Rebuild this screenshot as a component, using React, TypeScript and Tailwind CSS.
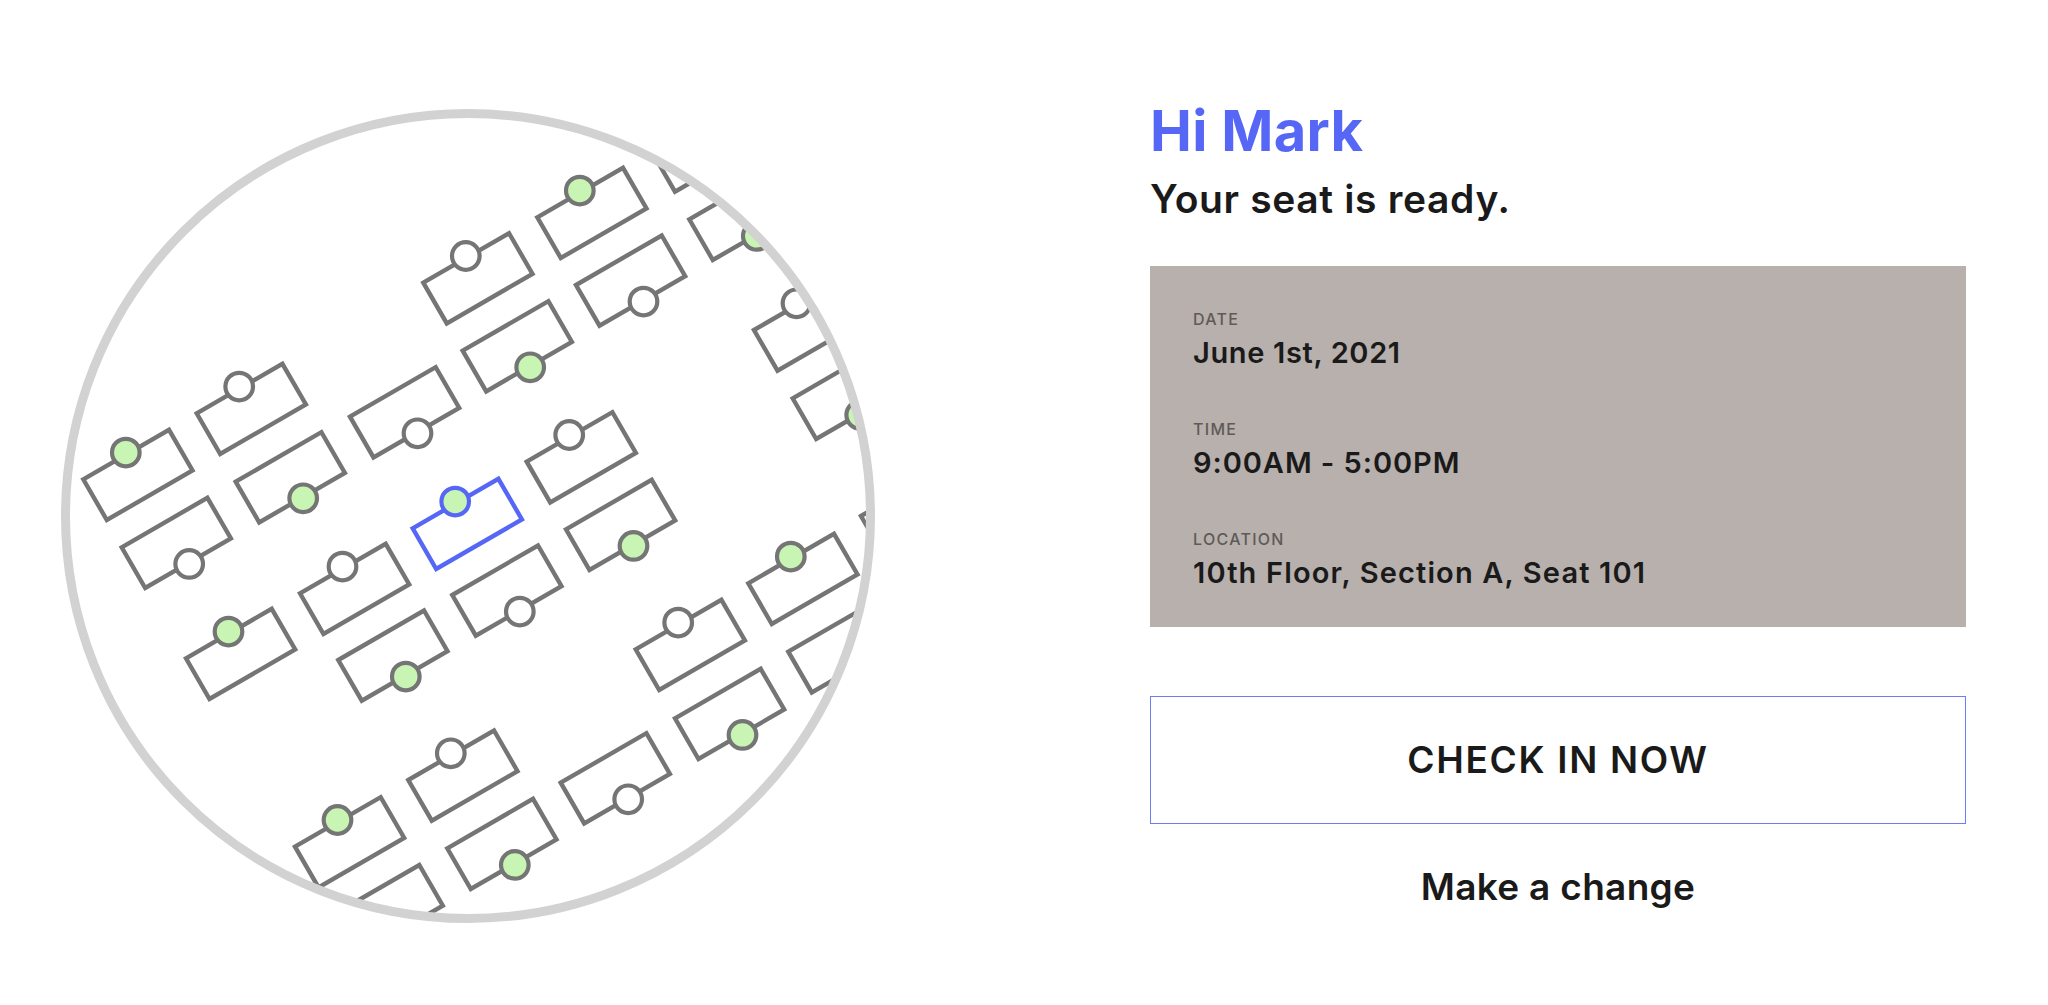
type Seat = { x: number; y: number; dot: "top" | "bottom"; on?: boolean; selected?: boolean };

// x, y is the left corner of each seat, in page pixels
const seats: Seat[] = [
  { x: 83.3, y: 479.3, dot: "top", on: true },
  { x: 196.7, y: 413.3, dot: "top" },
  { x: 235.7, y: 481.7, dot: "bottom", on: true },
  { x: 350, y: 416.7, dot: "bottom" },
  { x: 423.3, y: 282.7, dot: "top" },
  { x: 462.7, y: 350.7, dot: "bottom", on: true },
  { x: 537.3, y: 217.3, dot: "top", on: true },
  { x: 576, y: 285, dot: "bottom" },
  { x: 689.3, y: 219.3, dot: "bottom", on: true },
  { x: 651.5, y: 151, dot: "top" },
  { x: 754, y: 330, dot: "top" },
  { x: 792.7, y: 398.3, dot: "bottom", on: true },
  { x: 526.7, y: 461.7, dot: "top" },
  { x: 566, y: 529.3, dot: "bottom", on: true },
  { x: 121.7, y: 547.3, dot: "bottom" },
  { x: 186, y: 658.3, dot: "top", on: true },
  { x: 300, y: 593.3, dot: "top" },
  { x: 338.3, y: 660, dot: "bottom", on: true },
  { x: 452.3, y: 595, dot: "bottom" },
  { x: 408.3, y: 780, dot: "top" },
  { x: 295, y: 846.7, dot: "top", on: true },
  { x: 447.3, y: 848.3, dot: "bottom", on: true },
  { x: 333.6, y: 914.5, dot: "bottom" },
  { x: 748.3, y: 583.3, dot: "top", on: true },
  { x: 635.7, y: 649.3, dot: "top" },
  { x: 675, y: 718.3, dot: "bottom", on: true },
  { x: 560.7, y: 782.7, dot: "bottom" },
  { x: 788.3, y: 651.7, dot: "bottom", on: true },
  { x: 861, y: 516, dot: "top" },
  { x: 412.7, y: 528.3, dot: "top", on: true, selected: true },
];

function SeatShape({ seat }: { seat: Seat }) {
  const { x, y } = seat;
  const color = seat.selected ? "#5667f5" : "#757575";
  const points = `${x},${y} ${x + 85.7},${y - 49.5} ${x + 109.2},${y - 8.8} ${x + 23.5},${y + 40.7}`;
  const cx = seat.dot === "top" ? x + 42.5 : x + 67.5;
  const cy = seat.dot === "top" ? y - 26.7 : y + 16.6;
  return (
    <g>
      <polygon points={points} fill="#ffffff" stroke={color} strokeWidth={4.4} />
      <circle cx={cx} cy={cy} r={13.8} fill={seat.on ? "#c9f5b4" : "#ffffff"} stroke={color} strokeWidth={4.2} />
    </g>
  );
}

function SeatMap() {
  return (
    <svg width={816} height={816} viewBox="60 108 816 816" className="shrink-0">
      <defs>
        <clipPath id="disc">
          <circle cx={468} cy={516} r={403} />
        </clipPath>
      </defs>
      <g clipPath="url(#disc)">
        {seats.map((seat) => (
          <SeatShape key={`${seat.x}-${seat.y}`} seat={seat} />
        ))}
      </g>
      <circle cx={468} cy={516} r={402.5} fill="none" stroke="#d2d2d2" strokeWidth={9} />
    </svg>
  );
}

function Detail({ label, value, tracking }: { label: string; value: string; tracking: string }) {
  return (
    <div className="flex flex-col gap-[6px]">
      <div className="text-[16px] leading-[20px] font-medium tracking-[1.3px] text-[#5f5a58]">{label}</div>
      <div className={`text-[29px] leading-[36px] font-semibold text-[#1a1a1a] ${tracking}`}>{value}</div>
    </div>
  );
}

export default function App() {
  return (
    <div className="flex h-[1005px] bg-white pl-[60px] pt-[108px] [font-family:Inter,sans-serif]">
      <SeatMap />
      <div className="ml-[274px] flex w-[816px] flex-col">
        <h1 className="mt-[-7px] text-[56px] leading-[60px] font-bold tracking-[0.3px] text-[#5667f5]">Hi Mark</h1>
        <h2 className="mt-[14px] text-[39px] leading-[48px] font-semibold tracking-[0.65px] text-[#1a1a1a]">Your seat is ready.</h2>

        <div className="mt-[43px] flex h-[361px] flex-col gap-[48px] bg-[#b7b0ac] pt-[43px] pl-[43px]">
          <Detail label="DATE" value="June 1st, 2021" tracking="tracking-[0.65px]" />
          <Detail label="TIME" value="9:00AM - 5:00PM" tracking="tracking-[0.95px]" />
          <Detail label="LOCATION" value="10th Floor, Section A, Seat 101" tracking="tracking-[1.15px]" />
        </div>

        <button className="mt-[69px] h-[128px] border border-[#6c7bf6] bg-white text-[37px] font-semibold tracking-[1.7px] text-[#1a1a1a]">
          CHECK IN NOW
        </button>
        <div className="mt-[39px] text-center text-[37px] leading-[48px] font-semibold tracking-[0.3px] text-[#1a1a1a]">Make a change</div>
      </div>
    </div>
  );
}
